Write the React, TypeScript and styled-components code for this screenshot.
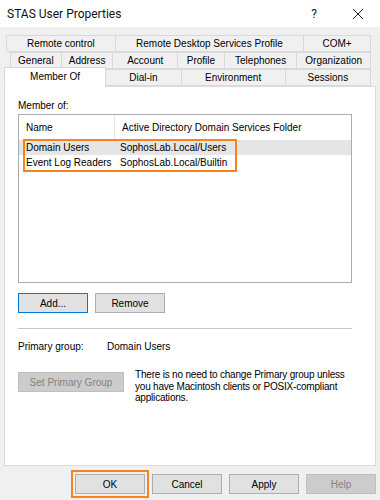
import styled, { createGlobalStyle } from 'styled-components';

const GlobalStyle = createGlobalStyle`
  html, body {
    margin: 0;
    padding: 0;
    background: #f0f0f0;
  }
  * {
    box-sizing: border-box;
  }
`;

const Window = styled.div`
  width: 380px;
  height: 500px;
  background: #f0f0f0;
  font-family: "Liberation Sans", Arial, sans-serif;
  font-size: 10px;
  color: #000;
  display: flex;
  flex-direction: column;
  overflow: hidden;
`;

const TitleBar = styled.div`
  height: 27px;
  background: #fff;
  display: flex;
  align-items: center;
  padding: 0 0 0 7px;
`;

const Title = styled.div`
  flex: 1;
  font-family: Roboto, "Liberation Sans", sans-serif;
  font-size: 12px;
  color: #111;
`;

const TitleButton = styled.div`
  width: 44px;
  height: 27px;
  display: flex;
  align-items: center;
  justify-content: center;
  font-family: Roboto, "Liberation Sans", sans-serif;
  font-size: 12px;
  color: #222;
`;

const Tabs = styled.div`
  margin-top: 8px;
  padding: 0 9px 0 4px;
  display: flex;
  flex-direction: column;
`;

const TabRow = styled.div<{ $indent?: number }>`
  display: flex;
  padding-left: ${({ $indent }) => $indent ?? 0}px;
  height: 17px;
  position: relative;
`;

const Tab = styled.div<{ $w: number; $active?: boolean }>`
  width: ${({ $w }) => $w}px;
  height: ${({ $active }) => ($active ? 20 : 17)}px;
  margin-top: ${({ $active }) => ($active ? -2 : 0)}px;
  background: ${({ $active }) => ($active ? '#fff' : '#f0f0f0')};
  border: 1px solid #d9d9d9;
  border-bottom: ${({ $active }) => ($active ? 'none' : '1px solid #d9d9d9')};
  margin-left: -1px;
  display: flex;
  align-items: center;
  justify-content: center;
  white-space: nowrap;
  color: #000;
  position: relative;
  z-index: ${({ $active }) => ($active ? 2 : 1)};
  padding-bottom: ${({ $active }) => ($active ? 2 : 0)}px;
`;

const Panel = styled.div`
  margin: 0 4px;
  height: 380px;
  background: #fff;
  border: 1px solid #dcdcdc;
  padding: 12px 23px 0 13px;
  display: flex;
  flex-direction: column;
  position: relative;
  z-index: 1;
`;

const Label = styled.div`
  line-height: 13px;
`;

const ListBox = styled.div`
  margin-top: 2px;
  height: 169px;
  border: 1px solid #acacac;
  background: #fff;
  position: relative;
`;

const HeaderRow = styled.div`
  display: flex;
  height: 25px;
  align-items: center;
`;

const HeaderCell = styled.div<{ $w?: number; $divider?: boolean }>`
  width: ${({ $w }) => ($w ? `${$w}px` : 'auto')};
  flex: ${({ $w }) => ($w ? 'none' : 1)};
  height: 25px;
  display: flex;
  align-items: center;
  padding-left: 7px;
  border-right: ${({ $divider }) => ($divider ? '1px solid #e5e5e5' : 'none')};
`;

const Row = styled.div<{ $selected?: boolean }>`
  display: flex;
  height: 15px;
  align-items: center;
  background: ${({ $selected }) => ($selected ? '#e5e5e5' : 'transparent')};
`;

const Cell = styled.div<{ $w?: number }>`
  width: ${({ $w }) => ($w ? `${$w}px` : 'auto')};
  padding-left: ${({ $w }) => ($w ? 7 : 5)}px;
  white-space: nowrap;
`;

const Highlight = styled.div<{ $l: number; $t: number; $w: number; $h: number }>`
  position: absolute;
  left: ${({ $l }) => $l}px;
  top: ${({ $t }) => $t}px;
  width: ${({ $w }) => $w}px;
  height: ${({ $h }) => $h}px;
  border: 2px solid #f7821e;
  pointer-events: none;
  z-index: 3;
`;

const ButtonRow = styled.div`
  display: flex;
  gap: 7px;
  margin-top: 10px;
`;

const Button = styled.div<{ $w?: number; $focused?: boolean; $disabled?: boolean }>`
  width: ${({ $w }) => $w ?? 70}px;
  height: 20px;
  flex: none;
  display: flex;
  align-items: center;
  justify-content: center;
  background: ${({ $disabled }) => ($disabled ? '#cccccc' : '#e1e1e1')};
  border: 1px solid ${({ $focused, $disabled }) => ($focused ? '#0078d7' : $disabled ? '#bfbfbf' : '#adadad')};
  color: ${({ $disabled }) => ($disabled ? '#838383' : '#000')};
  white-space: nowrap;
  position: relative;
`;

const Separator = styled.div`
  margin-top: 15px;
  height: 1px;
  background: #a0a0a0;
  opacity: 0.6;
`;

const PrimaryLine = styled.div`
  margin-top: 11px;
  display: flex;
  line-height: 13px;
`;

const PrimaryLabel = styled.div`
  width: 89px;
`;

const NoteRow = styled.div`
  margin-top: 19px;
  display: flex;
  gap: 11px;
  align-items: flex-start;
`;

const Note = styled.div`
  line-height: 11.5px;
  margin-top: -3px;
  width: 226px;
  letter-spacing: -0.2px;
`;

const Footer = styled.div`
  display: flex;
  justify-content: flex-end;
  gap: 7px;
  padding: 8px 4px 0 0;
`;

const OkWrap = styled.div`
  position: relative;
`;

const OkMark = styled.div`
  position: absolute;
  left: -4px;
  top: -4px;
  right: -4px;
  bottom: -4px;
  border: 2px solid #f7821e;
`;

export default function App() {
  return (
    <>
      <GlobalStyle />
      <Window>
        <TitleBar>
          <Title>STAS User Properties</Title>
          <TitleButton>?</TitleButton>
          <TitleButton>
            <svg width="12" height="12" viewBox="0 0 12 12">
              <path d="M1 1 L11 11 M11 1 L1 11" stroke="#222" strokeWidth="1" />
            </svg>
          </TitleButton>
        </TitleBar>
        <Tabs>
          <TabRow $indent={3}>
            <Tab $w={110}>Remote control</Tab>
            <Tab $w={190}>Remote Desktop Services Profile</Tab>
            <Tab $w={68}>COM+</Tab>
          </TabRow>
          <TabRow $indent={7}>
            <Tab $w={52}>General</Tab>
            <Tab $w={53}>Address</Tab>
            <Tab $w={66}>Account</Tab>
            <Tab $w={48}>Profile</Tab>
            <Tab $w={74}>Telephones</Tab>
            <Tab $w={75}>Organization</Tab>
          </TabRow>
          <TabRow $indent={1}>
            <Tab $w={103} $active>Member Of</Tab>
            <Tab $w={77}>Dial-in</Tab>
            <Tab $w={106}>Environment</Tab>
            <Tab $w={87}>Sessions</Tab>
          </TabRow>
        </Tabs>
        <Panel>
          <Label>Member of:</Label>
          <ListBox>
            <HeaderRow>
              <HeaderCell $w={96} $divider>Name</HeaderCell>
              <HeaderCell>Active Directory Domain Services Folder</HeaderCell>
            </HeaderRow>
            <Row $selected>
              <Cell $w={96}>Domain Users</Cell>
              <Cell>SophosLab.Local/Users</Cell>
            </Row>
            <Row>
              <Cell $w={96}>Event Log Readers</Cell>
              <Cell>SophosLab.Local/Builtin</Cell>
            </Row>
            <Highlight $l={4} $t={24} $w={214} $h={33} />
          </ListBox>
          <ButtonRow>
            <Button $focused>Add...</Button>
            <Button>Remove</Button>
          </ButtonRow>
          <Separator />
          <PrimaryLine>
            <PrimaryLabel>Primary group:</PrimaryLabel>
            <div>Domain Users</div>
          </PrimaryLine>
          <NoteRow>
            <Button $w={106} $disabled>Set Primary Group</Button>
            <Note>
              There is no need to change Primary group unless you have Macintosh clients or
              POSIX-compliant applications.
            </Note>
          </NoteRow>
        </Panel>
        <Footer>
          <OkWrap>
            <Button>OK</Button>
            <OkMark />
          </OkWrap>
          <Button>Cancel</Button>
          <Button>Apply</Button>
          <Button $disabled>Help</Button>
        </Footer>
      </Window>
    </>
  );
}
